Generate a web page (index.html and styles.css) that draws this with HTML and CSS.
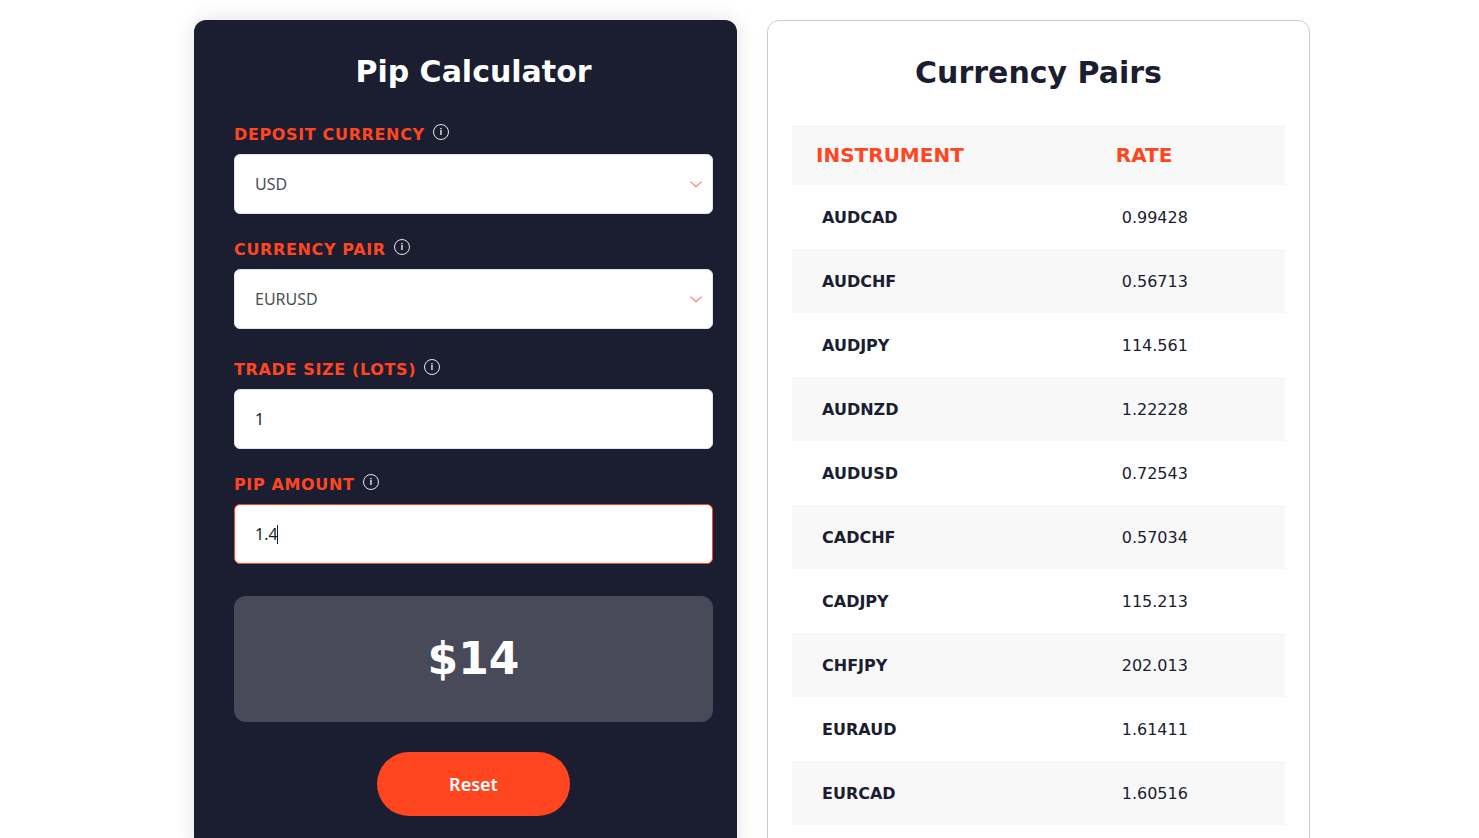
FILE: index.html
```html
<!DOCTYPE html>
<html lang="en">
<head>
<meta charset="utf-8">
<meta name="viewport" content="width=device-width, initial-scale=1">
<title>Pip Calculator</title>
<link rel="stylesheet" href="styles.css">
</head>
<body>
<svg class="sprite" aria-hidden="true">
  <symbol id="info" viewBox="0 0 16 16">
    <circle cx="8" cy="8" r="7.5" fill="none" stroke="currentColor" stroke-width=".9"/>
    <path d="M7.2 4.1h1.5v1.2H7.2zM7.2 6.1h1.5V11H7.2z" fill="currentColor" opacity=".85"/>
  </symbol>
  <symbol id="chevron" viewBox="0 0 12 7">
    <path d="M.4.6 6 5.8 11.6.6" fill="none" stroke="currentColor" stroke-width="1.2"/>
  </symbol>
</svg>
<main class="layout">
  <form class="calculator">
    <h1 class="title">Pip Calculator</h1>
    <div class="fields">
      <div class="field">
        <div class="field-head"><label class="label" for="deposit">Deposit Currency</label><svg class="info"><use href="#info"/></svg></div>
        <div class="control-wrap">
          <select class="control select" id="deposit"><option>USD</option></select>
          <svg class="chevron"><use href="#chevron"/></svg>
        </div>
      </div>
      <div class="field">
        <div class="field-head"><label class="label" for="pair">Currency Pair</label><svg class="info"><use href="#info"/></svg></div>
        <div class="control-wrap">
          <select class="control select" id="pair"><option>EURUSD</option></select>
          <svg class="chevron"><use href="#chevron"/></svg>
        </div>
      </div>
      <div class="field field-spaced">
        <div class="field-head"><label class="label" for="size">Trade Size (Lots)</label><svg class="info"><use href="#info"/></svg></div>
        <input class="control" id="size" type="text" value="1">
      </div>
      <div class="field">
        <div class="field-head"><label class="label" for="pip">Pip Amount</label><svg class="info"><use href="#info"/></svg></div>
        <div class="control-wrap">
          <input class="control control-active" id="pip" type="text" value="1.4">
          <span class="caret"></span>
        </div>
      </div>
    </div>
    <output class="result" for="deposit pair size pip">$14</output>
    <button class="reset" type="button">Reset</button>
  </form>
  <section class="pairs">
    <h2 class="title title-dark">Currency Pairs</h2>
    <table class="rates">
      <thead><tr><th class="col-name" scope="col">Instrument</th><th scope="col">Rate</th></tr></thead>
      <tbody>
        <tr><th scope="row">AUDCAD</th><td>0.99428</td></tr>
        <tr><th scope="row">AUDCHF</th><td>0.56713</td></tr>
        <tr><th scope="row">AUDJPY</th><td>114.561</td></tr>
        <tr><th scope="row">AUDNZD</th><td>1.22228</td></tr>
        <tr><th scope="row">AUDUSD</th><td>0.72543</td></tr>
        <tr><th scope="row">CADCHF</th><td>0.57034</td></tr>
        <tr><th scope="row">CADJPY</th><td>115.213</td></tr>
        <tr><th scope="row">CHFJPY</th><td>202.013</td></tr>
        <tr><th scope="row">EURAUD</th><td>1.61411</td></tr>
        <tr><th scope="row">EURCAD</th><td>1.60516</td></tr>
      </tbody>
    </table>
  </section>
</main>
</body>
</html>
```
FILE: styles.css
```css
* { box-sizing: border-box; }
html { scrollbar-width: none; }
body {
  margin: 0;
  background: #fff;
  color: #1b1d30;
  font: 16px/24px "DejaVu Sans", sans-serif;
}
.sprite { display: none; }
.layout {
  display: grid;
  grid-template-columns: 1fr 1fr;
  gap: 30px;
  max-width: 1141px;
  margin: 0 auto;
  padding: 20px 0 20px 25px;
}
.calculator {
  display: flex;
  flex-direction: column;
  padding: 33px 24px 22px 40px;
  border-radius: 12px;
  background: #1b1d30;
  box-shadow: 0 0 20px rgba(0, 0, 0, 0.12);
}
.title {
  margin: 0;
  color: #fff;
  font-size: 30px;
  font-weight: 700;
  line-height: 38px;
  text-align: center;
}
.title-dark { color: #1b1d30; }
.fields {
  display: flex;
  flex-direction: column;
  gap: 23px;
  margin-top: 31px;
}
.field-spaced { margin-top: 5px; }
.field-head {
  display: flex;
  gap: 8px;
  height: 32px;
}
.label {
  color: #ff4621;
  font-weight: 700;
  letter-spacing: 0.04em;
  line-height: 26px;
  text-transform: uppercase;
}
.info {
  width: 16px;
  height: 16px;
  margin-top: 2px;
  color: #fff;
}
.control-wrap { position: relative; }
.control {
  display: block;
  width: 100%;
  height: 60px;
  padding: 0 20px;
  border: 1px solid #e1e4ea;
  border-radius: 6px;
  outline: 0;
  background: #fff;
  color: #1b1d30;
  font: 16px/24px "Noto Sans", sans-serif;
}
.select {
  appearance: none;
  color: #495057;
}
.control-active,
.control:focus { border-color: #ff4621; }
.chevron {
  position: absolute;
  top: 27px;
  right: 11px;
  width: 12px;
  height: 7px;
  color: #ff7a60;
  pointer-events: none;
}
.caret {
  position: absolute;
  top: 21px;
  left: 43px;
  width: 1px;
  height: 19px;
  background: #1b1d30;
}
.result {
  margin-top: 32px;
  padding: 33px 20px;
  border-radius: 12px;
  background: #494a59;
  color: #fff;
  font-size: 44px;
  font-weight: 700;
  line-height: 60px;
  text-align: center;
}
.reset {
  align-self: center;
  margin-top: 30px;
  padding: 20px 72px;
  border: 0;
  border-radius: 32px;
  background: #ff4621;
  color: #fff;
  font: 600 18px/24px "Noto Sans", sans-serif;
}
.pairs {
  padding: 33px 24px 24px;
  border: 1px solid #ccc;
  border-radius: 12px;
}
.rates {
  width: 100%;
  margin-top: 33px;
  border-collapse: collapse;
  table-layout: fixed;
  text-align: left;
}
.col-name { width: 60.8%; }
.rates thead th {
  padding: 18px 24px;
  background: #f8f8f8;
  color: #ff4621;
  font-size: 20px;
  text-transform: uppercase;
}
.rates tbody th,
.rates tbody td { padding: 21px 30px 19px; }
.rates tbody tr:nth-child(even) { background: #f8f8f8; }
```
